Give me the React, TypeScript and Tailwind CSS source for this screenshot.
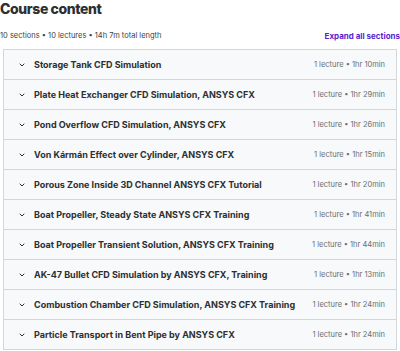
const sections = [
  { title: "Storage Tank CFD Simulation", length: "1hr 10min" },
  { title: "Plate Heat Exchanger CFD Simulation, ANSYS CFX", length: "1hr 29min" },
  { title: "Pond Overflow CFD Simulation, ANSYS CFX", length: "1hr 26min" },
  { title: "Von Kármán Effect over Cylinder, ANSYS CFX", length: "1hr 15min" },
  { title: "Porous Zone Inside 3D Channel ANSYS CFX Tutorial", length: "1hr 20min" },
  { title: "Boat Propeller, Steady State ANSYS CFX Training", length: "1hr 41min" },
  { title: "Boat Propeller Transient Solution, ANSYS CFX Training", length: "1hr 44min" },
  { title: "AK-47 Bullet CFD Simulation by ANSYS CFX, Training", length: "1hr 13min" },
  { title: "Combustion Chamber CFD Simulation, ANSYS CFX Training", length: "1hr 24min" },
  { title: "Particle Transport in Bent Pipe by ANSYS CFX", length: "1hr 24min" },
];

function Chevron() {
  return (
    <svg className="w-[8px] h-[8px] text-[#2d2f31]" viewBox="0 0 24 24" fill="none" stroke="currentColor" strokeWidth={3} strokeLinecap="round" strokeLinejoin="round">
      <path d="M6 9l6 6 6-6" />
    </svg>
  );
}

export default function App() {
  return (
    <div className="w-[400px] h-[351px] overflow-hidden bg-white text-[#2d2f31] font-['Inter',sans-serif]">
      <h2 className="text-[14px] leading-[18px] font-extrabold tracking-[-0.4px]">Course content</h2>
      <div className="flex items-center justify-between mt-[12px] h-[12px]">
        <span className="text-[7.5px] text-[#3e4143]">10 sections • 10 lectures • 14h 7m total length</span>
        <span className="text-[8px] font-bold text-[#5624d0] whitespace-nowrap">Expand all sections</span>
      </div>
      <div className="mt-[7px] mx-[3px] border border-[#d1d7dc]">
        {sections.map((s, i) => (
          <div
            key={i}
            className={`flex items-center bg-[#f7f9fa] pl-[14px] pr-[11px] ${i > 0 ? "h-[30px] border-t border-[#d1d7dc]" : "h-[29px]"}`}
          >
            <Chevron />
            <span className="ml-[8px] flex-1 text-[9px] font-bold text-[#2d2f31] truncate">{s.title}</span>
            <span className="text-[7.5px] text-[#6a6f73] whitespace-nowrap">1 lecture • {s.length}</span>
          </div>
        ))}
      </div>
    </div>
  );
}
